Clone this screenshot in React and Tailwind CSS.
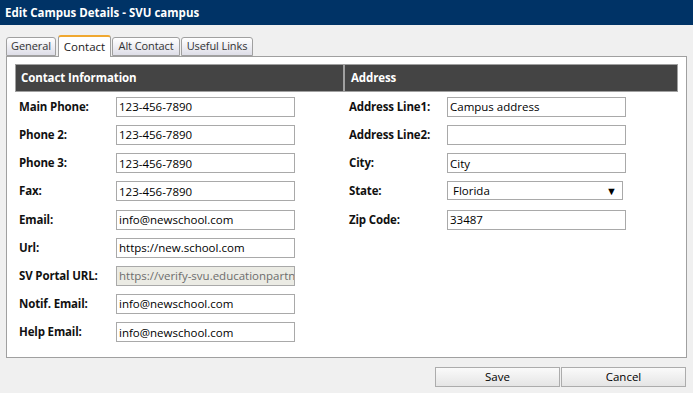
import React from 'react';

const contactRows = [
  { label: 'Main Phone:', value: '123-456-7890' },
  { label: 'Phone 2:', value: '123-456-7890' },
  { label: 'Phone 3:', value: '123-456-7890' },
  { label: 'Fax:', value: '123-456-7890' },
  { label: 'Email:', value: 'info@newschool.com' },
  { label: 'Url:', value: 'https://new.school.com' },
  { label: 'SV Portal URL:', value: 'https://verify-svu.educationpartners.com', disabled: true },
  { label: 'Notif. Email:', value: 'info@newschool.com' },
  { label: 'Help Email:', value: 'info@newschool.com' },
];

const addressRows = [
  { label: 'Address Line1:', value: 'Campus address' },
  { label: 'Address Line2:', value: '' },
  { label: 'City:', value: 'City' },
  { label: 'State:', value: 'Florida', select: true },
  { label: 'Zip Code:', value: '33487' },
];

const tabs = [
  { name: 'General', width: 'w-[50px]', margin: 'ml-0' },
  { name: 'Contact', width: 'w-[53px]', margin: 'ml-[2px]', active: true },
  { name: 'Alt Contact', width: 'w-[68px]', margin: 'ml-[1px]' },
  { name: 'Useful Links', width: 'w-[72px]', margin: 'ml-[1px]' },
];

function Field({ row, labelWidth }) {
  return (
    <div className="flex items-start h-[28.2px] pt-[4.8px]">
      <div className={`${labelWidth} pt-[2px] font-bold text-[11.5px] leading-[15px] tracking-[-0.15px] text-[#111]`}>
        {row.label}
      </div>
      {row.select ? (
        <div className="w-[176px] h-[19px] border border-[#a9a9a9] bg-white flex items-center justify-between pl-[5px] pr-[5px] text-[11.5px]">
          <span>{row.value}</span>
          <span className="text-[11px] leading-none">▼</span>
        </div>
      ) : (
        <div
          className={`w-[179px] h-[20px] border border-[#a9a9a9] flex items-center pl-[2px] overflow-hidden whitespace-nowrap text-[11.5px] ${
            row.disabled ? 'bg-[#ebebe4] text-[#6d6d6d]' : 'bg-white text-black'
          }`}
        >
          {row.value}
        </div>
      )}
    </div>
  );
}

export default function App() {
  return (
    <div className="w-[693px] h-[393px] bg-[#f0f0f0] overflow-hidden font-['Open_Sans',sans-serif] text-[12px] text-black">
      <div className="h-[25px] bg-[#003366] text-white font-bold text-[11.5px] pl-[5px] flex items-center">
        Edit Campus Details - SVU campus
      </div>

      <div className="pl-[6px] pr-[6px] pt-[11px]">
        <div className="flex items-end h-[21px] relative z-10 -mb-px">
          {tabs.map((tab) =>
            tab.active ? (
              <div
                key={tab.name}
                className={`${tab.width} ${tab.margin} h-[22px] bg-white border-x border-[#a0a0a0] border-t-2 border-t-[#f0a830] rounded-t-[3px] flex items-center justify-center text-[11.5px] text-[#222]`}
              >
                {tab.name}
              </div>
            ) : (
              <div
                key={tab.name}
                className={`${tab.width} ${tab.margin} h-[19px] mb-px bg-gradient-to-b from-[#ffffff] to-[#dedee8] border border-[#a0a0a0] rounded-t-[3px] flex items-center justify-center text-[11px] tracking-[-0.1px] text-[#333] whitespace-nowrap`}
              >
                {tab.name}
              </div>
            )
          )}
        </div>

        <div className="w-[681px] h-[302px] bg-white border border-[#a0a0a0] pt-[7px] px-[8px]">
          <div className="flex h-[28px] bg-[#444444] border border-[#a0a0a0] text-white font-bold text-[11.5px] tracking-[-0.1px]">
            <div className="w-[329px] border-r-2 border-[#a0a0a0] flex items-center pl-[5px]">Contact Information</div>
            <div className="flex-1 flex items-center pl-[6px]">Address</div>
          </div>
          <div className="flex">
            <div className="w-[330px] pl-[4px]">
              {contactRows.map((row) => (
                <Field key={row.label} row={row} labelWidth="w-[97px]" />
              ))}
            </div>
            <div className="flex-1 pl-[4px]">
              {addressRows.map((row) => (
                <Field key={row.label} row={row} labelWidth="w-[98px]" />
              ))}
            </div>
          </div>
        </div>
      </div>

      <div className="flex justify-end pr-[7px] pt-[9px]">
        <button className="w-[125px] h-[20px] border border-[#acacac] bg-gradient-to-b from-[#fafafa] to-[#e5e5e5] text-[11.5px] leading-none">
          Save
        </button>
        <button className="w-[125px] ml-px h-[20px] border border-[#acacac] bg-gradient-to-b from-[#fafafa] to-[#e5e5e5] text-[11.5px] leading-none">
          Cancel
        </button>
      </div>
    </div>
  );
}
